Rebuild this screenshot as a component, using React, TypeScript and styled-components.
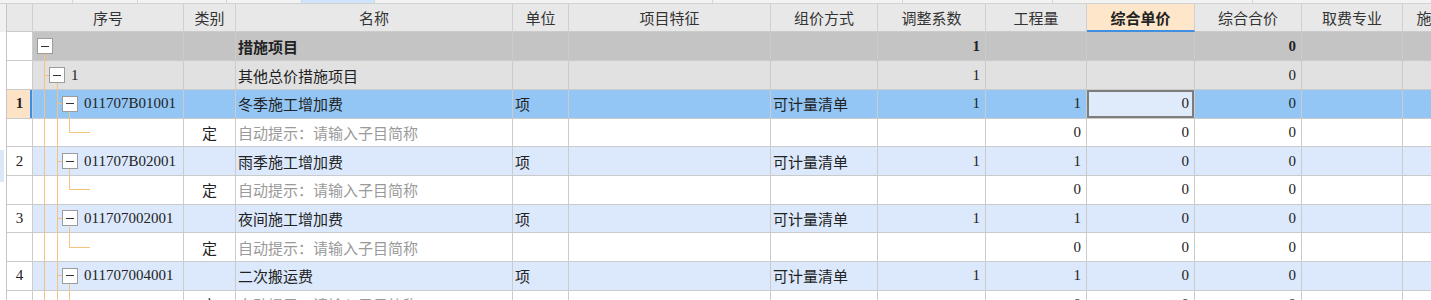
import React from "react";
import styled, { createGlobalStyle, css } from "styled-components";

const LINE = "#cbcbcb";
const TREE = "#f7c27e";
const NUM_FONT = `"Liberation Serif", "Noto Sans CJK SC", serif`;
const COLS = [26, 151, 52, 277, 56, 202, 107, 108, 101, 108, 107, 101, 148];
const GRID = COLS.map((w) => `${w}px`).join(" ");

const GlobalStyle = createGlobalStyle`
  html, body { margin: 0; padding: 0; background: #fff; }
  body {
    font-family: "Noto Sans CJK SC", "Noto Sans", sans-serif;
    font-size: 15px;
    color: #222;
  }
  #root { width: 1431px; height: 300px; overflow: hidden; }
`;

const Page = styled.div`
  width: 1431px;
  height: 300px;
  overflow: hidden;
  display: flex;
  flex-direction: column;
`;

const TopStrip = styled.div`
  height: 4px;
  flex: none;
  box-sizing: border-box;
  display: flex;
  background: #f3f3f3;
  border-bottom: 1px solid #d2d2d2;
`;

const StripTab = styled.div<{ $w: number; $active?: boolean }>`
  width: ${(p) => p.$w}px;
  flex: none;
  box-sizing: border-box;
  border-right: 1px solid #d6d6d6;
  background: ${(p) => (p.$active ? "#cfe4fa" : "transparent")};
`;

const Main = styled.div`
  display: flex;
  flex: 1;
  min-height: 0;
`;

const Gutter = styled.div`
  width: 7px;
  flex: none;
  box-sizing: border-box;
  border-right: 1px solid #c4c4c4;
  display: flex;
  flex-direction: column;
`;

const GutterHead = styled.div`
  height: 28px;
  flex: none;
  background: #f0f0f0;
`;

const GutterGap = styled.div`
  height: 118px;
  flex: none;
`;

const GutterMark = styled.div`
  height: 32px;
  width: 4px;
  flex: none;
  background: #dbe8f8;
`;

const Sheet = styled.div`
  display: flex;
  flex-direction: column;
  flex: none;
`;

const HeaderRow = styled.div`
  display: grid;
  grid-template-columns: ${GRID};
  height: 28px;
  flex: none;
  background: #e8e8e8;
`;

const HeaderCell = styled.div<{ $active?: boolean }>`
  box-sizing: border-box;
  min-width: 0;
  border-right: 1px solid #d0d0d0;
  border-bottom: 1px solid ${LINE};
  display: flex;
  align-items: center;
  justify-content: center;
  white-space: nowrap;
  overflow: hidden;
  color: #333;
  ${(p) =>
    p.$active &&
    css`
      background: #fde6c9;
      font-weight: 700;
      color: #222;
      border-bottom: 2px solid #3f8fe3;
    `}
`;

type RowKind = "root" | "group" | "selected" | "item" | "child";
const ROW_BG: Record<RowKind, string> = {
  root: "#c4c4c4",
  group: "#e1e1e1",
  selected: "#93c6f5",
  item: "#dce9fc",
  child: "#ffffff",
};

const Row = styled.div<{ $kind: RowKind }>`
  display: grid;
  grid-template-columns: ${GRID};
  flex: none;
  height: ${(p) =>
    p.$kind === "root" || p.$kind === "group" ? "29px" : "calc(86px / 3)"};
  background: ${(p) => ROW_BG[p.$kind]};
`;

type Align = "left" | "center" | "right";

const Cell = styled.div<{
  $align?: Align;
  $bold?: boolean;
  $muted?: boolean;
  $num?: boolean;
}>`
  box-sizing: border-box;
  min-width: 0;
  border-right: 1px solid ${LINE};
  border-bottom: 1px solid ${LINE};
  display: flex;
  align-items: center;
  white-space: nowrap;
  overflow: hidden;
  justify-content: ${(p) =>
    p.$align === "right" ? "flex-end" : p.$align === "center" ? "center" : "flex-start"};
  padding: ${(p) =>
    p.$align === "right" ? "0 5px 0 0" : p.$align === "center" ? "0" : "0 0 0 2px"};
  font-weight: ${(p) => (p.$bold ? 700 : 400)};
  color: ${(p) => (p.$muted ? "#9a9a9a" : "#222")};
  ${(p) =>
    p.$num &&
    css`
      font-family: ${NUM_FONT};
    `}
`;

const RowNum = styled(Cell)<{ $selected?: boolean }>`
  background: ${(p) => (p.$selected ? "#fde3c5" : "#ffffff")};
  ${(p) =>
    p.$selected &&
    css`
      box-shadow: inset -2px 0 0 #3b8de6;
    `}
`;

const ActiveCell = styled(Cell)`
  background: #dfeafb;
  box-shadow: inset 0 0 0 2px #7d7d7d;
`;

type TreeKind = "root" | "group" | "item" | "child";
const seg = (x: string, y: string, w: string, h: string) =>
  `linear-gradient(${TREE}, ${TREE}) ${x} ${y} / ${w} ${h} no-repeat`;
const FULL0 = seg("11px", "0", "1px", "100%");
const FULL1 = seg("24px", "0", "1px", "100%");
const TREE_BG: Record<TreeKind, string> = {
  root: seg("11px", "bottom", "1px", "calc(50% - 8px)"),
  group: [FULL0, seg("11px", "center", "5px", "1px"), seg("24px", "bottom", "1px", "calc(50% - 8px)")].join(", "),
  item: [FULL0, FULL1, seg("24px", "center", "5px", "1px"), seg("36px", "bottom", "1px", "calc(50% - 8px)")].join(", "),
  child: [FULL0, FULL1, seg("36px", "top", "1px", "50%"), seg("36px", "center", "21px", "1px")].join(", "),
};
const INDENT: Record<TreeKind, number> = { root: 4, group: 16, item: 29, child: 0 };

const TreeCell = styled(Cell)<{ $tree: TreeKind }>`
  padding-left: ${(p) => INDENT[p.$tree]}px;
  background: ${(p) => TREE_BG[p.$tree]};
`;

const Toggle = styled.span`
  width: 16px;
  height: 16px;
  flex: none;
  box-sizing: border-box;
  border: 1px solid #9c9c9c;
  background: #fff;
  display: flex;
  align-items: center;
  justify-content: center;
  &::before {
    content: "";
    width: 8px;
    height: 1px;
    background: #333;
  }
`;

const Code = styled.span`
  margin-left: 6px;
  font-family: ${NUM_FONT};
`;

const HEADERS = [
  "",
  "序号",
  "类别",
  "名称",
  "单位",
  "项目特征",
  "组价方式",
  "调整系数",
  "工程量",
  "综合单价",
  "综合合价",
  "取费专业",
  "施工组织措施类别",
];

const STRIP = [73, 65, 89, 75, 73, 338, 190, 150, 200, 228];

type Item = { no: string; code: string; name: string; selected?: boolean };
const ITEMS: Item[] = [
  { no: "1", code: "011707B01001", name: "冬季施工增加费", selected: true },
  { no: "2", code: "011707B02001", name: "雨季施工增加费" },
  { no: "3", code: "011707002001", name: "夜间施工增加费" },
  { no: "4", code: "011707004001", name: "二次搬运费" },
];

function ItemRow({ item }: { item: Item }) {
  const sel = !!item.selected;
  return (
    <Row $kind={sel ? "selected" : "item"}>
      <RowNum $align="center" $num $selected={sel} $bold={sel}>
        {item.no}
      </RowNum>
      <TreeCell $tree="item">
        <Toggle />
        <Code>{item.code}</Code>
      </TreeCell>
      <Cell />
      <Cell>{item.name}</Cell>
      <Cell>项</Cell>
      <Cell />
      <Cell>可计量清单</Cell>
      <Cell $align="right" $num>1</Cell>
      <Cell $align="right" $num>1</Cell>
      {sel ? (
        <ActiveCell $align="right" $num>0</ActiveCell>
      ) : (
        <Cell $align="right" $num>0</Cell>
      )}
      <Cell $align="right" $num>0</Cell>
      <Cell />
      <Cell />
    </Row>
  );
}

function ChildRow() {
  return (
    <Row $kind="child">
      <RowNum />
      <TreeCell $tree="child" />
      <Cell $align="center">定</Cell>
      <Cell $muted>自动提示：请输入子目简称</Cell>
      <Cell />
      <Cell />
      <Cell />
      <Cell />
      <Cell $align="right" $num>0</Cell>
      <Cell $align="right" $num>0</Cell>
      <Cell $align="right" $num>0</Cell>
      <Cell />
      <Cell />
    </Row>
  );
}

export default function App() {
  return (
    <>
      <GlobalStyle />
      <Page>
        <TopStrip>
          {STRIP.map((w, i) => (
            <StripTab key={i} $w={w} $active={i === 4} />
          ))}
        </TopStrip>
        <Main>
          <Gutter>
            <GutterHead />
            <GutterGap />
            <GutterMark />
          </Gutter>
          <Sheet>
            <HeaderRow>
              {HEADERS.map((h, i) => (
                <HeaderCell key={i} $active={h === "综合单价"}>
                  {h}
                </HeaderCell>
              ))}
            </HeaderRow>
            <Row $kind="root">
              <RowNum />
              <TreeCell $tree="root">
                <Toggle />
              </TreeCell>
              <Cell />
              <Cell $bold>措施项目</Cell>
              <Cell />
              <Cell />
              <Cell />
              <Cell $align="right" $bold $num>1</Cell>
              <Cell />
              <Cell />
              <Cell $align="right" $bold $num>0</Cell>
              <Cell />
              <Cell />
            </Row>
            <Row $kind="group">
              <RowNum />
              <TreeCell $tree="group">
                <Toggle />
                <Code>1</Code>
              </TreeCell>
              <Cell />
              <Cell>其他总价措施项目</Cell>
              <Cell />
              <Cell />
              <Cell />
              <Cell $align="right" $num>1</Cell>
              <Cell />
              <Cell />
              <Cell $align="right" $num>0</Cell>
              <Cell />
              <Cell />
            </Row>
            {ITEMS.map((it) => (
              <React.Fragment key={it.no}>
                <ItemRow item={it} />
                <ChildRow />
              </React.Fragment>
            ))}
          </Sheet>
        </Main>
      </Page>
    </>
  );
}
